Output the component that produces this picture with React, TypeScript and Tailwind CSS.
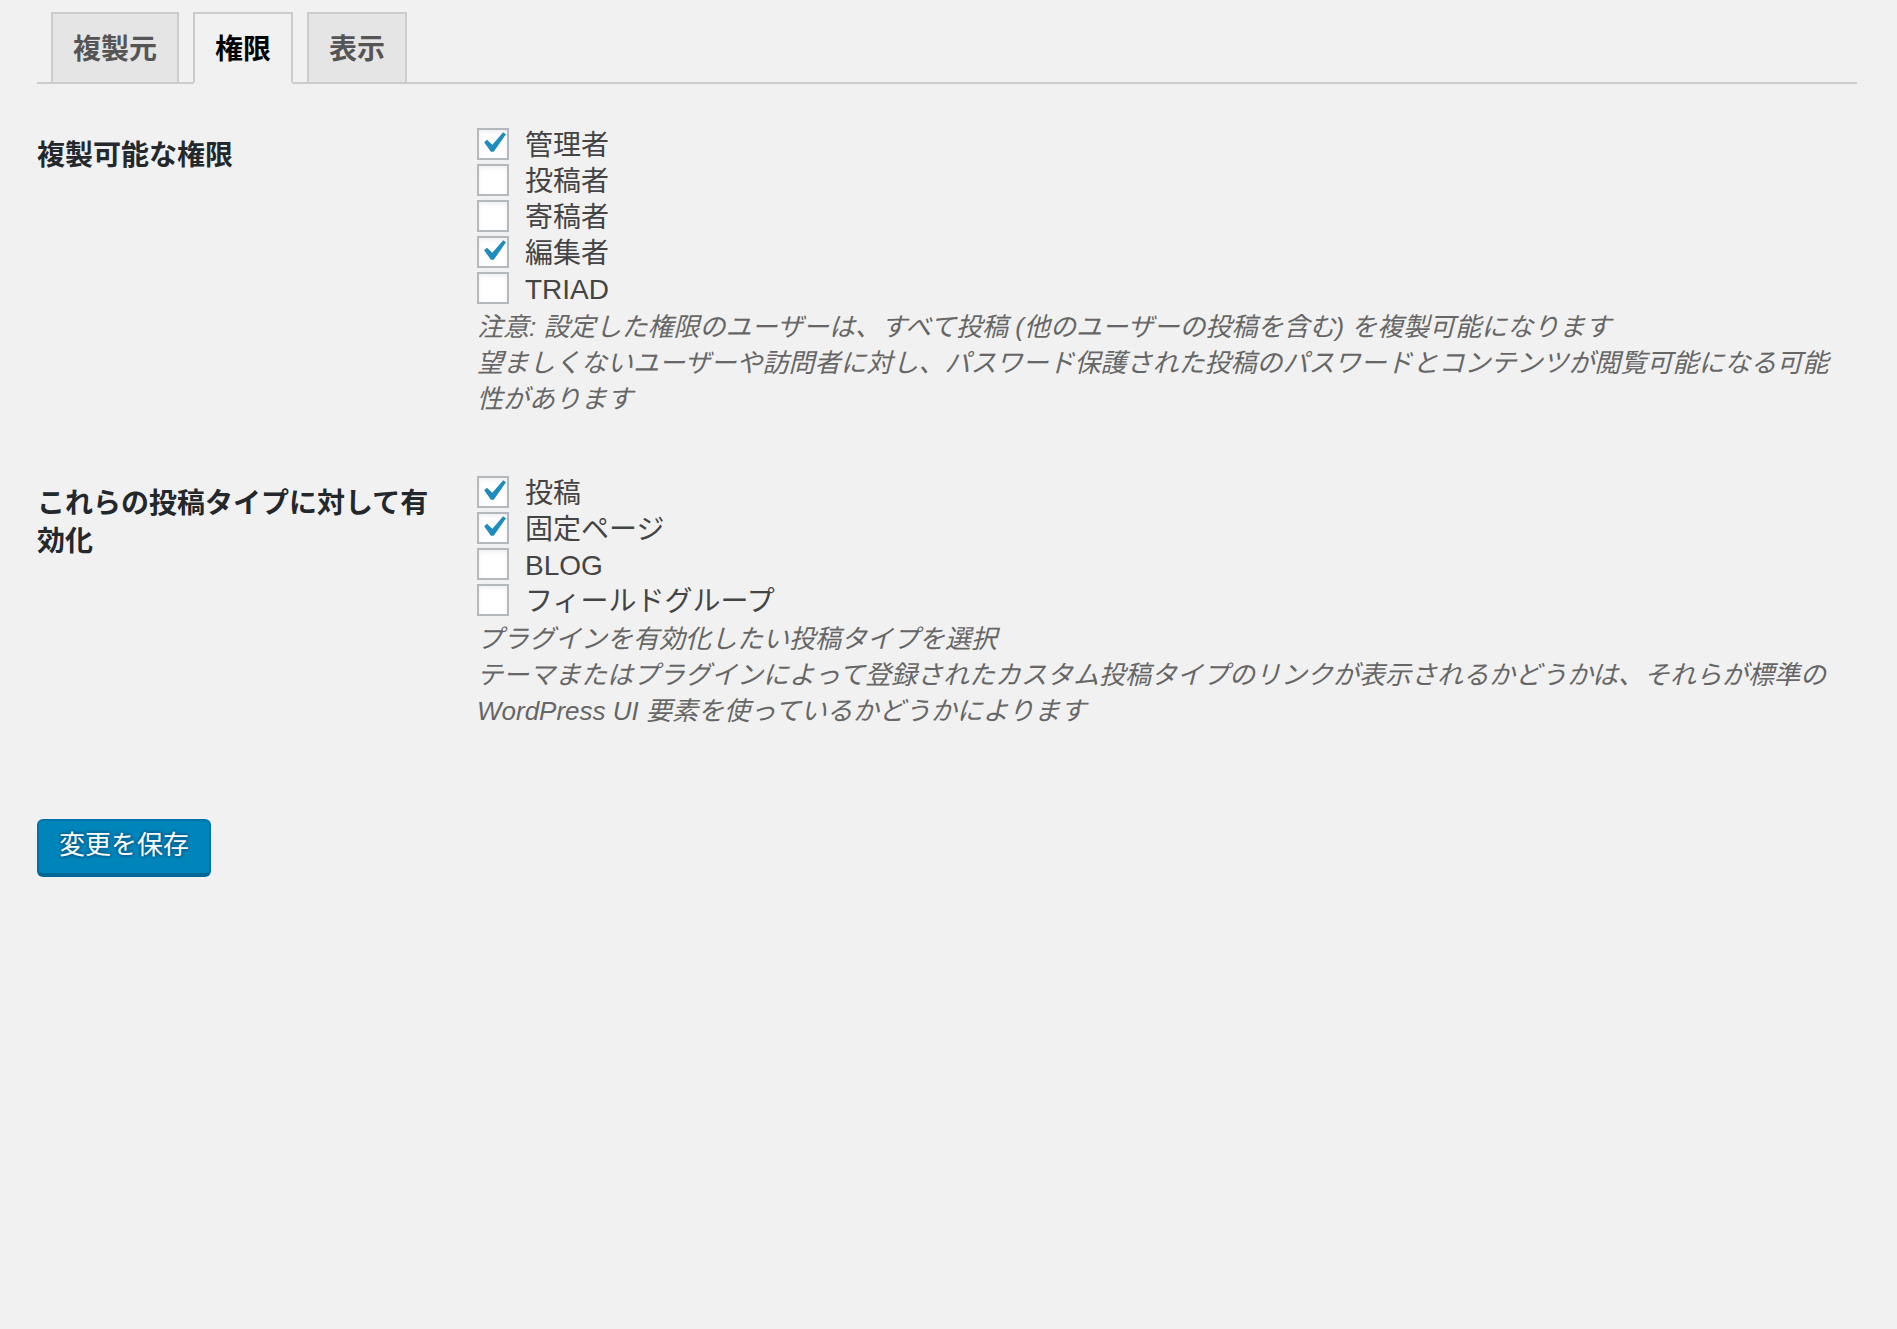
import React from "react";

function Box({ checked }: { checked: boolean }) {
  return (
    <span className="relative block w-[32px] h-[32px] shrink-0 bg-white border-2 border-[#b4b9be] shadow-[inset_0_2px_4px_rgba(0,0,0,0.07)]">
      {checked && (
        <svg className="absolute left-[-7px] top-[-8px] w-[42px] h-[42px]" viewBox="0 0 20 20">
          <path fill="#1e8cbe" d="M14.83 4.89l1.34.94-5.81 8.38H9.02L5.78 9.67l1.34-1.25 2.57 2.4z" />
        </svg>
      )}
    </span>
  );
}

function Item({ label, checked }: { label: string; checked: boolean }) {
  return (
    <label className="flex items-center h-[36px]">
      <Box checked={checked} />
      <span className="ml-[16px] pt-[3px] text-[28px] leading-[33px] text-[#444]">{label}</span>
    </label>
  );
}

function Row({
  title,
  items,
  notes,
}: {
  title: string;
  items: { label: string; checked: boolean }[];
  notes: string[];
}) {
  return (
    <div className="flex">
      <div className="w-[420px] shrink-0 pr-[20px] pt-[41px] pb-[40px]">
        <div className="text-[28px] leading-[38px] font-semibold text-[#23282d]">{title}</div>
      </div>
      <div className="flex-1 px-[20px] pt-[30px] pb-[27px]">
        {items.map((it) => (
          <Item key={it.label} label={it.label} checked={it.checked} />
        ))}
        <div className="pt-[3px] italic text-[26px] leading-[36px] text-[#666]">
          {notes.map((n) => (
            <div key={n}>{n}</div>
          ))}
        </div>
      </div>
    </div>
  );
}

export default function App() {
  return (
    <div
      className="min-h-screen bg-[#f1f1f1] pl-[37px] pr-[40px]"
      style={{ fontFamily: '"Liberation Sans", "Noto Sans CJK JP", sans-serif' }}
    >
      <div className="flex items-end pt-[12px] border-b-2 border-[#cccccc]">
        <div className="ml-[14px] px-[20px] pt-[12px] pb-[8px] border-2 border-b-0 border-[#cccccc] bg-[#e5e5e5] text-[28px] leading-[48px] font-semibold text-[#555]">
          複製元
        </div>
        <div className="ml-[14px] mb-[-2px] px-[20px] pt-[12px] pb-[8px] border-2 border-[#cccccc] border-b-[#f1f1f1] bg-[#f1f1f1] text-[28px] leading-[48px] font-semibold text-black">
          権限
        </div>
        <div className="ml-[14px] px-[20px] pt-[12px] pb-[8px] border-2 border-b-0 border-[#cccccc] bg-[#e5e5e5] text-[28px] leading-[48px] font-semibold text-[#555]">
          表示
        </div>
      </div>

      <div className="mt-[12px]">
        <Row
          title="複製可能な権限"
          items={[
            { label: "管理者", checked: true },
            { label: "投稿者", checked: false },
            { label: "寄稿者", checked: false },
            { label: "編集者", checked: true },
            { label: "TRIAD", checked: false },
          ]}
          notes={[
            "注意: 設定した権限のユーザーは、すべて投稿 (他のユーザーの投稿を含む) を複製可能になります",
            "望ましくないユーザーや訪問者に対し、パスワード保護された投稿のパスワードとコンテンツが閲覧可能になる可能性があります",
          ]}
        />
        <Row
          title="これらの投稿タイプに対して有効化"
          items={[
            { label: "投稿", checked: true },
            { label: "固定ページ", checked: true },
            { label: "BLOG", checked: false },
            { label: "フィールドグループ", checked: false },
          ]}
          notes={[
            "プラグインを有効化したい投稿タイプを選択",
            "テーマまたはプラグインによって登録されたカスタム投稿タイプのリンクが表示されるかどうかは、それらが標準の WordPress UI 要素を使っているかどうかによります",
          ]}
        />
      </div>

      <div className="mt-[63px]">
        <button className="h-[56px] px-[20px] pb-[4px] rounded-[6px] border-2 border-[#0073aa] border-b-[#006799] bg-[#0085ba] text-white text-[26px] leading-[46px] shadow-[0_2px_0_#006799] [text-shadow:0_-2px_2px_#006799,2px_0_2px_#006799,0_2px_2px_#006799,-2px_0_2px_#006799]">
          変更を保存
        </button>
      </div>
    </div>
  );
}
